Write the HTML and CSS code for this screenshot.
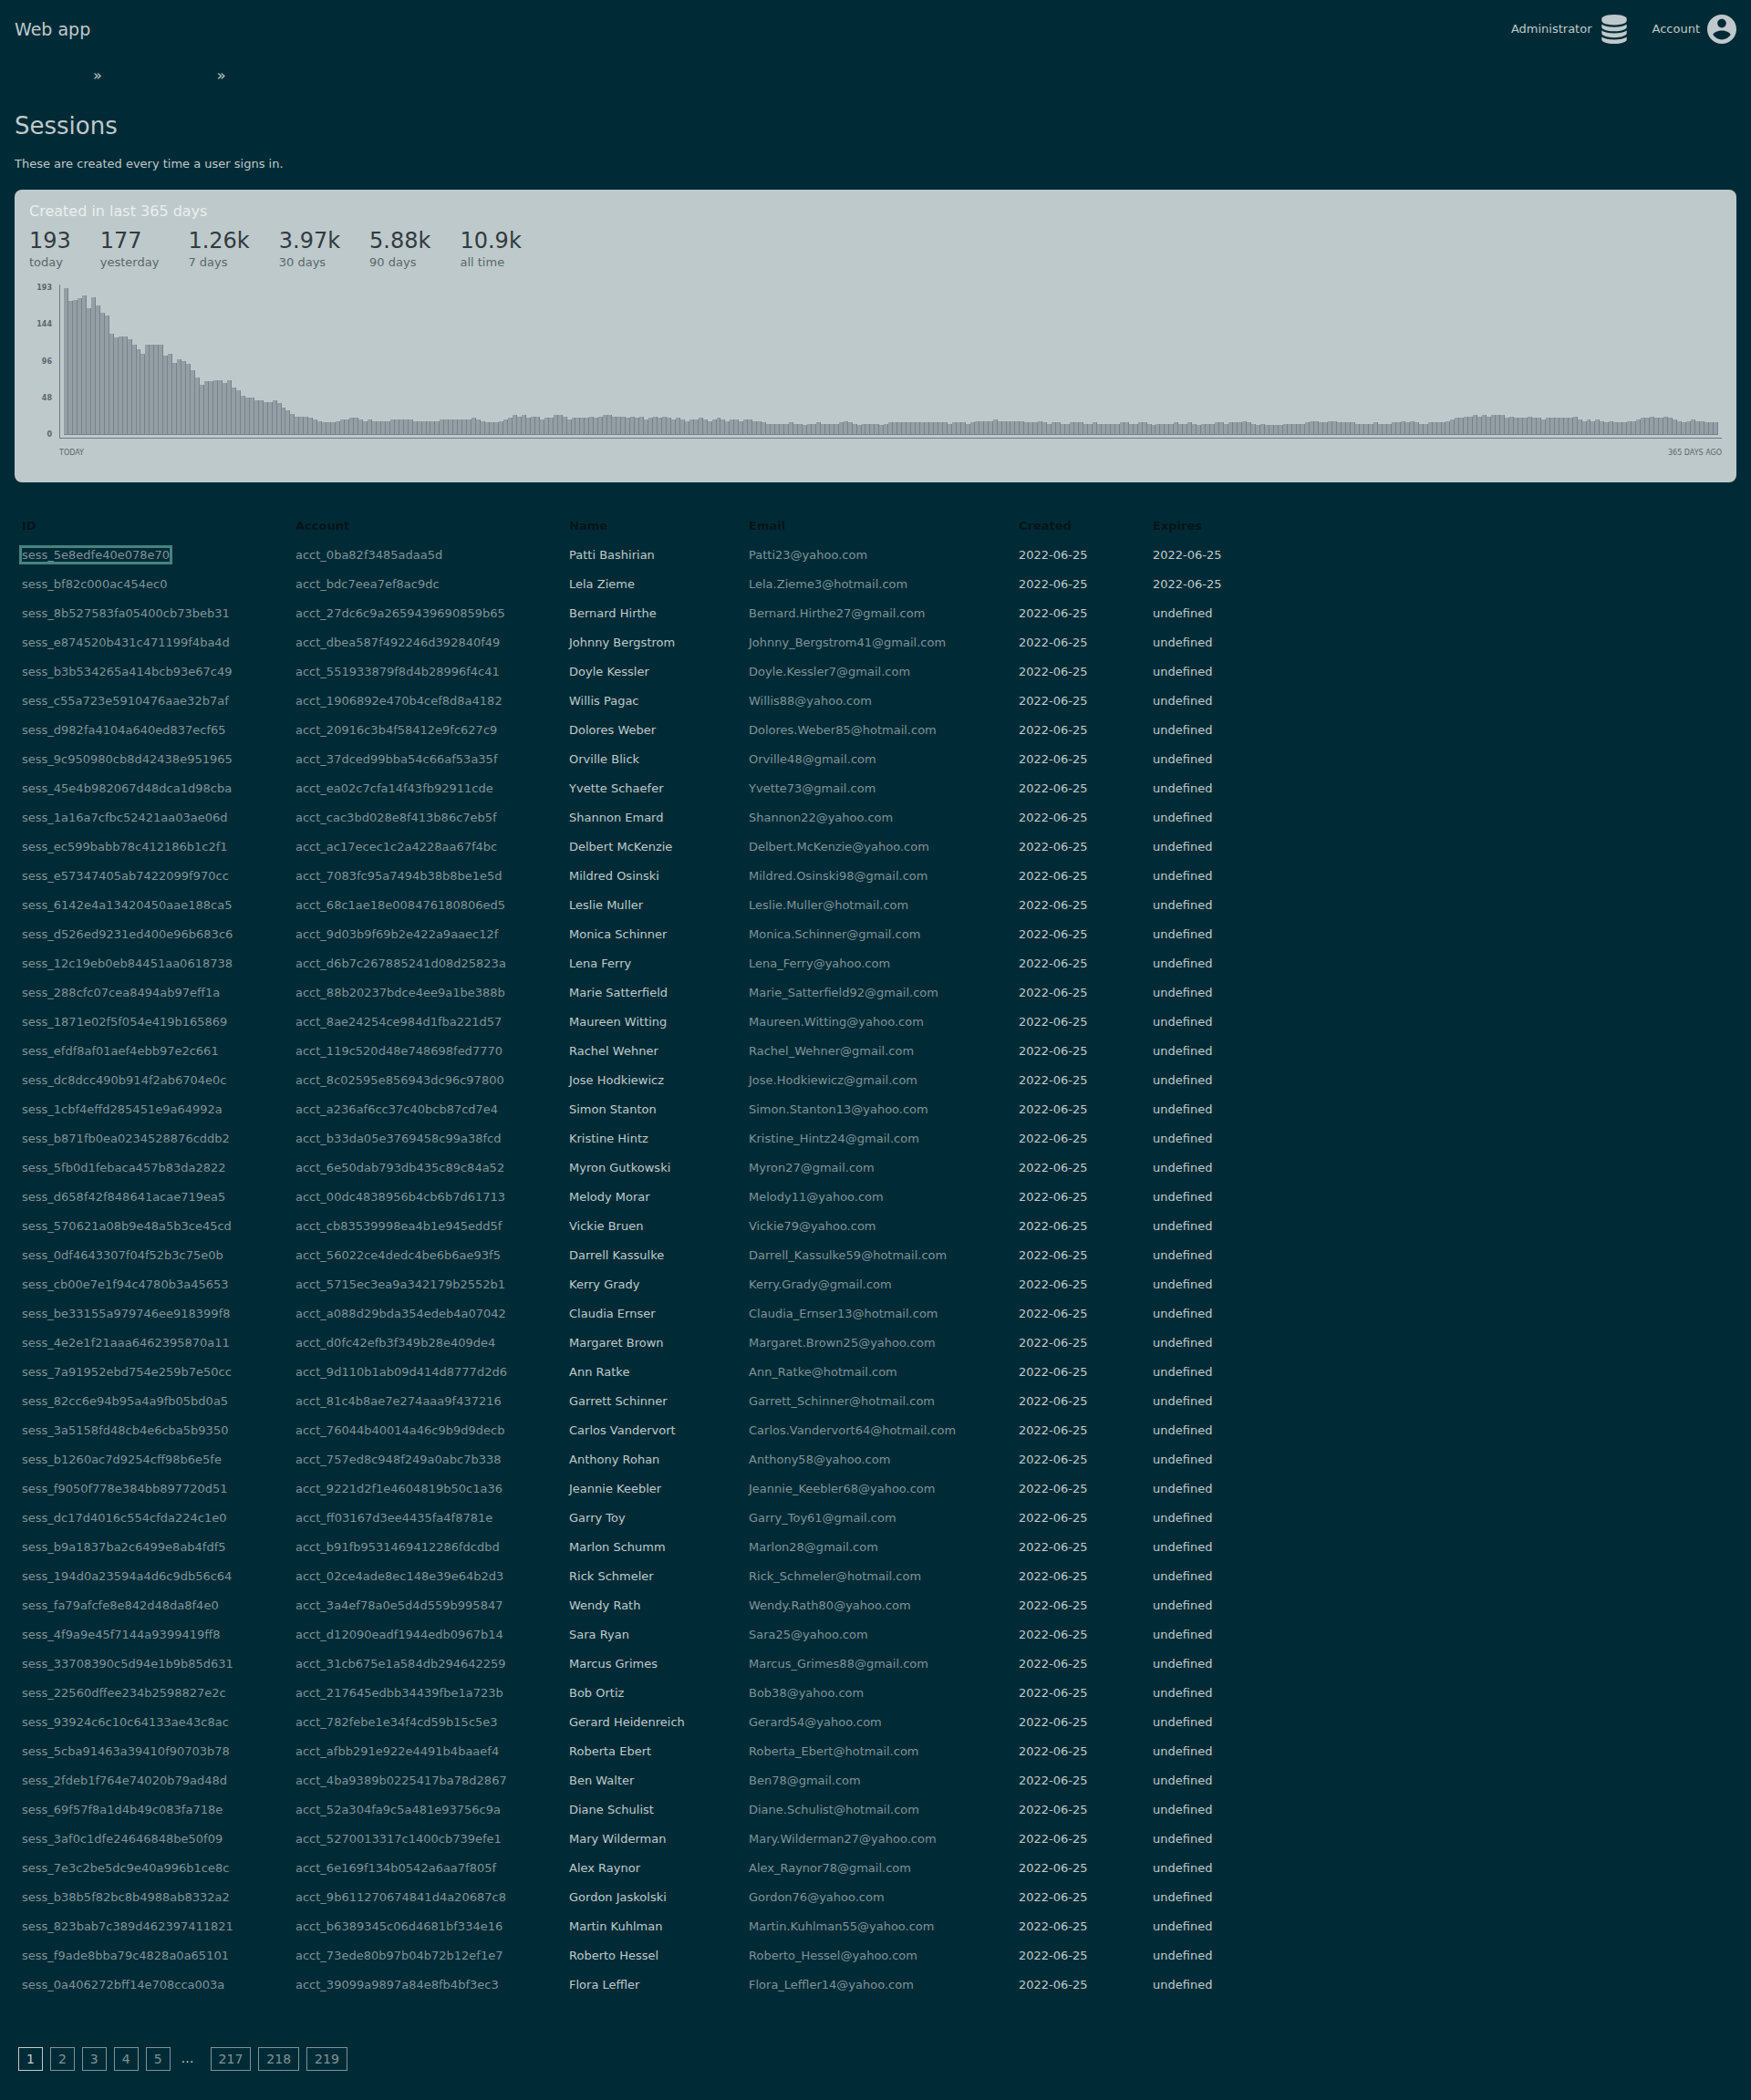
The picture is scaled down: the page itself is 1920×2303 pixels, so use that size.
FILE: index.html
```html
<!DOCTYPE html>
<html lang="en">
<head>
<meta charset="utf-8">
<meta name="viewport" content="width=device-width, initial-scale=1">
<title>Sessions</title>
<link rel="stylesheet" href="styles.css">
</head>
<body>
<header class="topbar">
  <a class="brand" href="#">Web app</a>
  <nav class="menus">
    <button class="menu" type="button">Administrator
      <svg class="menu-icon" viewBox="0 0 1536 1792" aria-hidden="true"><path d="M768 768q237 0 443-43t325-127v170q0 69-103 128t-280 93.500-385 34.500-385-34.500-280-93.500-103-128v-170q119 84 325 127t443 43zm0 768q237 0 443-43t325-127v170q0 69-103 128t-280 93.500-385 34.500-385-34.500-280-93.500-103-128v-170q119 84 325 127t443 43zm0-384q237 0 443-43t325-127v170q0 69-103 128t-280 93.500-385 34.500-385-34.500-280-93.500-103-128v-170q119 84 325 127t443 43zm0-1152q208 0 385 34.500t280 93.500 103 128v128q0 69-103 128t-280 93.500-385 34.500-385-34.500-280-93.500-103-128v-128q0-69 103-128t280-93.500 385-34.500z"/></svg>
    </button>
    <button class="menu" type="button">Account
      <svg class="menu-icon" viewBox="2 2 20 20" aria-hidden="true"><path d="M12 2C6.480 2 2 6.480 2 12s4.480 10 10 10 10-4.480 10-10S17.520 2 12 2zm0 3c1.660 0 3 1.340 3 3s-1.340 3-3 3-3-1.340-3-3 1.340-3 3-3zm0 14.200c-2.500 0-4.710-1.280-6-3.220.030-1.990 4-3.080 6-3.080 1.990 0 5.970 1.090 6 3.080-1.290 1.940-3.500 3.220-6 3.220z"/></svg>
    </button>
  </nav>
</header>
<div class="breadcrumbs"><span>»</span><span>»</span></div>
<main>
  <h1>Sessions</h1>
  <p class="intro">These are created every time a user signs in.</p>

  <section class="card">
    <h2>Created in last 365 days</h2>
    <ul class="stats">
      <li><strong>193</strong>today</li>
      <li><strong>177</strong>yesterday</li>
      <li><strong>1.26k</strong>7 days</li>
      <li><strong>3.97k</strong>30 days</li>
      <li><strong>5.88k</strong>90 days</li>
      <li><strong>10.9k</strong>all time</li>
    </ul>
    <div class="chart">
      <div class="scale"><span>193</span><span>144</span><span>96</span><span>48</span><span>0</span></div>
      <div class="bars" id="bars"></div>
      <div class="range"><span>TODAY</span><span>365 DAYS AGO</span></div>
    </div>
  </section>

  <table>
    <colgroup><col class="col-id"><col class="col-id"><col class="col-name"><col class="col-email"><col class="col-date"><col class="col-date"></colgroup>
    <thead>
      <tr><th>ID</th><th>Account</th><th>Name</th><th>Email</th><th>Created</th><th>Expires</th></tr>
    </thead>
    <tbody>
      <tr><td><a class="focused" href="#">sess_5e8edfe40e078e70</a></td><td><a href="#">acct_0ba82f3485adaa5d</a></td><td>Patti Bashirian</td><td><a href="#">Patti23@yahoo.com</a></td><td>2022-06-25</td><td>2022-06-25</td></tr>
      <tr><td><a href="#">sess_bf82c000ac454ec0</a></td><td><a href="#">acct_bdc7eea7ef8ac9dc</a></td><td>Lela Zieme</td><td><a href="#">Lela.Zieme3@hotmail.com</a></td><td>2022-06-25</td><td>2022-06-25</td></tr>
      <tr><td><a href="#">sess_8b527583fa05400cb73beb31</a></td><td><a href="#">acct_27dc6c9a2659439690859b65</a></td><td>Bernard Hirthe</td><td><a href="#">Bernard.Hirthe27@gmail.com</a></td><td>2022-06-25</td><td>undefined</td></tr>
      <tr><td><a href="#">sess_e874520b431c471199f4ba4d</a></td><td><a href="#">acct_dbea587f492246d392840f49</a></td><td>Johnny Bergstrom</td><td><a href="#">Johnny_Bergstrom41@gmail.com</a></td><td>2022-06-25</td><td>undefined</td></tr>
      <tr><td><a href="#">sess_b3b534265a414bcb93e67c49</a></td><td><a href="#">acct_551933879f8d4b28996f4c41</a></td><td>Doyle Kessler</td><td><a href="#">Doyle.Kessler7@gmail.com</a></td><td>2022-06-25</td><td>undefined</td></tr>
      <tr><td><a href="#">sess_c55a723e5910476aae32b7af</a></td><td><a href="#">acct_1906892e470b4cef8d8a4182</a></td><td>Willis Pagac</td><td><a href="#">Willis88@yahoo.com</a></td><td>2022-06-25</td><td>undefined</td></tr>
      <tr><td><a href="#">sess_d982fa4104a640ed837ecf65</a></td><td><a href="#">acct_20916c3b4f58412e9fc627c9</a></td><td>Dolores Weber</td><td><a href="#">Dolores.Weber85@hotmail.com</a></td><td>2022-06-25</td><td>undefined</td></tr>
      <tr><td><a href="#">sess_9c950980cb8d42438e951965</a></td><td><a href="#">acct_37dced99bba54c66af53a35f</a></td><td>Orville Blick</td><td><a href="#">Orville48@gmail.com</a></td><td>2022-06-25</td><td>undefined</td></tr>
      <tr><td><a href="#">sess_45e4b982067d48dca1d98cba</a></td><td><a href="#">acct_ea02c7cfa14f43fb92911cde</a></td><td>Yvette Schaefer</td><td><a href="#">Yvette73@gmail.com</a></td><td>2022-06-25</td><td>undefined</td></tr>
      <tr><td><a href="#">sess_1a16a7cfbc52421aa03ae06d</a></td><td><a href="#">acct_cac3bd028e8f413b86c7eb5f</a></td><td>Shannon Emard</td><td><a href="#">Shannon22@yahoo.com</a></td><td>2022-06-25</td><td>undefined</td></tr>
      <tr><td><a href="#">sess_ec599babb78c412186b1c2f1</a></td><td><a href="#">acct_ac17ecec1c2a4228aa67f4bc</a></td><td>Delbert McKenzie</td><td><a href="#">Delbert.McKenzie@yahoo.com</a></td><td>2022-06-25</td><td>undefined</td></tr>
      <tr><td><a href="#">sess_e57347405ab7422099f970cc</a></td><td><a href="#">acct_7083fc95a7494b38b8be1e5d</a></td><td>Mildred Osinski</td><td><a href="#">Mildred.Osinski98@gmail.com</a></td><td>2022-06-25</td><td>undefined</td></tr>
      <tr><td><a href="#">sess_6142e4a13420450aae188ca5</a></td><td><a href="#">acct_68c1ae18e008476180806ed5</a></td><td>Leslie Muller</td><td><a href="#">Leslie.Muller@hotmail.com</a></td><td>2022-06-25</td><td>undefined</td></tr>
      <tr><td><a href="#">sess_d526ed9231ed400e96b683c6</a></td><td><a href="#">acct_9d03b9f69b2e422a9aaec12f</a></td><td>Monica Schinner</td><td><a href="#">Monica.Schinner@gmail.com</a></td><td>2022-06-25</td><td>undefined</td></tr>
      <tr><td><a href="#">sess_12c19eb0eb84451aa0618738</a></td><td><a href="#">acct_d6b7c267885241d08d25823a</a></td><td>Lena Ferry</td><td><a href="#">Lena_Ferry@yahoo.com</a></td><td>2022-06-25</td><td>undefined</td></tr>
      <tr><td><a href="#">sess_288cfc07cea8494ab97eff1a</a></td><td><a href="#">acct_88b20237bdce4ee9a1be388b</a></td><td>Marie Satterfield</td><td><a href="#">Marie_Satterfield92@gmail.com</a></td><td>2022-06-25</td><td>undefined</td></tr>
      <tr><td><a href="#">sess_1871e02f5f054e419b165869</a></td><td><a href="#">acct_8ae24254ce984d1fba221d57</a></td><td>Maureen Witting</td><td><a href="#">Maureen.Witting@yahoo.com</a></td><td>2022-06-25</td><td>undefined</td></tr>
      <tr><td><a href="#">sess_efdf8af01aef4ebb97e2c661</a></td><td><a href="#">acct_119c520d48e748698fed7770</a></td><td>Rachel Wehner</td><td><a href="#">Rachel_Wehner@gmail.com</a></td><td>2022-06-25</td><td>undefined</td></tr>
      <tr><td><a href="#">sess_dc8dcc490b914f2ab6704e0c</a></td><td><a href="#">acct_8c02595e856943dc96c97800</a></td><td>Jose Hodkiewicz</td><td><a href="#">Jose.Hodkiewicz@gmail.com</a></td><td>2022-06-25</td><td>undefined</td></tr>
      <tr><td><a href="#">sess_1cbf4effd285451e9a64992a</a></td><td><a href="#">acct_a236af6cc37c40bcb87cd7e4</a></td><td>Simon Stanton</td><td><a href="#">Simon.Stanton13@yahoo.com</a></td><td>2022-06-25</td><td>undefined</td></tr>
      <tr><td><a href="#">sess_b871fb0ea0234528876cddb2</a></td><td><a href="#">acct_b33da05e3769458c99a38fcd</a></td><td>Kristine Hintz</td><td><a href="#">Kristine_Hintz24@gmail.com</a></td><td>2022-06-25</td><td>undefined</td></tr>
      <tr><td><a href="#">sess_5fb0d1febaca457b83da2822</a></td><td><a href="#">acct_6e50dab793db435c89c84a52</a></td><td>Myron Gutkowski</td><td><a href="#">Myron27@gmail.com</a></td><td>2022-06-25</td><td>undefined</td></tr>
      <tr><td><a href="#">sess_d658f42f848641acae719ea5</a></td><td><a href="#">acct_00dc4838956b4cb6b7d61713</a></td><td>Melody Morar</td><td><a href="#">Melody11@yahoo.com</a></td><td>2022-06-25</td><td>undefined</td></tr>
      <tr><td><a href="#">sess_570621a08b9e48a5b3ce45cd</a></td><td><a href="#">acct_cb83539998ea4b1e945edd5f</a></td><td>Vickie Bruen</td><td><a href="#">Vickie79@yahoo.com</a></td><td>2022-06-25</td><td>undefined</td></tr>
      <tr><td><a href="#">sess_0df4643307f04f52b3c75e0b</a></td><td><a href="#">acct_56022ce4dedc4be6b6ae93f5</a></td><td>Darrell Kassulke</td><td><a href="#">Darrell_Kassulke59@hotmail.com</a></td><td>2022-06-25</td><td>undefined</td></tr>
      <tr><td><a href="#">sess_cb00e7e1f94c4780b3a45653</a></td><td><a href="#">acct_5715ec3ea9a342179b2552b1</a></td><td>Kerry Grady</td><td><a href="#">Kerry.Grady@gmail.com</a></td><td>2022-06-25</td><td>undefined</td></tr>
      <tr><td><a href="#">sess_be33155a979746ee918399f8</a></td><td><a href="#">acct_a088d29bda354edeb4a07042</a></td><td>Claudia Ernser</td><td><a href="#">Claudia_Ernser13@hotmail.com</a></td><td>2022-06-25</td><td>undefined</td></tr>
      <tr><td><a href="#">sess_4e2e1f21aaa6462395870a11</a></td><td><a href="#">acct_d0fc42efb3f349b28e409de4</a></td><td>Margaret Brown</td><td><a href="#">Margaret.Brown25@yahoo.com</a></td><td>2022-06-25</td><td>undefined</td></tr>
      <tr><td><a href="#">sess_7a91952ebd754e259b7e50cc</a></td><td><a href="#">acct_9d110b1ab09d414d8777d2d6</a></td><td>Ann Ratke</td><td><a href="#">Ann_Ratke@hotmail.com</a></td><td>2022-06-25</td><td>undefined</td></tr>
      <tr><td><a href="#">sess_82cc6e94b95a4a9fb05bd0a5</a></td><td><a href="#">acct_81c4b8ae7e274aaa9f437216</a></td><td>Garrett Schinner</td><td><a href="#">Garrett_Schinner@hotmail.com</a></td><td>2022-06-25</td><td>undefined</td></tr>
      <tr><td><a href="#">sess_3a5158fd48cb4e6cba5b9350</a></td><td><a href="#">acct_76044b40014a46c9b9d9decb</a></td><td>Carlos Vandervort</td><td><a href="#">Carlos.Vandervort64@hotmail.com</a></td><td>2022-06-25</td><td>undefined</td></tr>
      <tr><td><a href="#">sess_b1260ac7d9254cff98b6e5fe</a></td><td><a href="#">acct_757ed8c948f249a0abc7b338</a></td><td>Anthony Rohan</td><td><a href="#">Anthony58@yahoo.com</a></td><td>2022-06-25</td><td>undefined</td></tr>
      <tr><td><a href="#">sess_f9050f778e384bb897720d51</a></td><td><a href="#">acct_9221d2f1e4604819b50c1a36</a></td><td>Jeannie Keebler</td><td><a href="#">Jeannie_Keebler68@yahoo.com</a></td><td>2022-06-25</td><td>undefined</td></tr>
      <tr><td><a href="#">sess_dc17d4016c554cfda224c1e0</a></td><td><a href="#">acct_ff03167d3ee4435fa4f8781e</a></td><td>Garry Toy</td><td><a href="#">Garry_Toy61@gmail.com</a></td><td>2022-06-25</td><td>undefined</td></tr>
      <tr><td><a href="#">sess_b9a1837ba2c6499e8ab4fdf5</a></td><td><a href="#">acct_b91fb9531469412286fdcdbd</a></td><td>Marlon Schumm</td><td><a href="#">Marlon28@gmail.com</a></td><td>2022-06-25</td><td>undefined</td></tr>
      <tr><td><a href="#">sess_194d0a23594a4d6c9db56c64</a></td><td><a href="#">acct_02ce4ade8ec148e39e64b2d3</a></td><td>Rick Schmeler</td><td><a href="#">Rick_Schmeler@hotmail.com</a></td><td>2022-06-25</td><td>undefined</td></tr>
      <tr><td><a href="#">sess_fa79afcfe8e842d48da8f4e0</a></td><td><a href="#">acct_3a4ef78a0e5d4d559b995847</a></td><td>Wendy Rath</td><td><a href="#">Wendy.Rath80@yahoo.com</a></td><td>2022-06-25</td><td>undefined</td></tr>
      <tr><td><a href="#">sess_4f9a9e45f7144a9399419ff8</a></td><td><a href="#">acct_d12090eadf1944edb0967b14</a></td><td>Sara Ryan</td><td><a href="#">Sara25@yahoo.com</a></td><td>2022-06-25</td><td>undefined</td></tr>
      <tr><td><a href="#">sess_33708390c5d94e1b9b85d631</a></td><td><a href="#">acct_31cb675e1a584db294642259</a></td><td>Marcus Grimes</td><td><a href="#">Marcus_Grimes88@gmail.com</a></td><td>2022-06-25</td><td>undefined</td></tr>
      <tr><td><a href="#">sess_22560dffee234b2598827e2c</a></td><td><a href="#">acct_217645edbb34439fbe1a723b</a></td><td>Bob Ortiz</td><td><a href="#">Bob38@yahoo.com</a></td><td>2022-06-25</td><td>undefined</td></tr>
      <tr><td><a href="#">sess_93924c6c10c64133ae43c8ac</a></td><td><a href="#">acct_782febe1e34f4cd59b15c5e3</a></td><td>Gerard Heidenreich</td><td><a href="#">Gerard54@yahoo.com</a></td><td>2022-06-25</td><td>undefined</td></tr>
      <tr><td><a href="#">sess_5cba91463a39410f90703b78</a></td><td><a href="#">acct_afbb291e922e4491b4baaef4</a></td><td>Roberta Ebert</td><td><a href="#">Roberta_Ebert@hotmail.com</a></td><td>2022-06-25</td><td>undefined</td></tr>
      <tr><td><a href="#">sess_2fdeb1f764e74020b79ad48d</a></td><td><a href="#">acct_4ba9389b0225417ba78d2867</a></td><td>Ben Walter</td><td><a href="#">Ben78@gmail.com</a></td><td>2022-06-25</td><td>undefined</td></tr>
      <tr><td><a href="#">sess_69f57f8a1d4b49c083fa718e</a></td><td><a href="#">acct_52a304fa9c5a481e93756c9a</a></td><td>Diane Schulist</td><td><a href="#">Diane.Schulist@hotmail.com</a></td><td>2022-06-25</td><td>undefined</td></tr>
      <tr><td><a href="#">sess_3af0c1dfe24646848be50f09</a></td><td><a href="#">acct_5270013317c1400cb739efe1</a></td><td>Mary Wilderman</td><td><a href="#">Mary.Wilderman27@yahoo.com</a></td><td>2022-06-25</td><td>undefined</td></tr>
      <tr><td><a href="#">sess_7e3c2be5dc9e40a996b1ce8c</a></td><td><a href="#">acct_6e169f134b0542a6aa7f805f</a></td><td>Alex Raynor</td><td><a href="#">Alex_Raynor78@gmail.com</a></td><td>2022-06-25</td><td>undefined</td></tr>
      <tr><td><a href="#">sess_b38b5f82bc8b4988ab8332a2</a></td><td><a href="#">acct_9b611270674841d4a20687c8</a></td><td>Gordon Jaskolski</td><td><a href="#">Gordon76@yahoo.com</a></td><td>2022-06-25</td><td>undefined</td></tr>
      <tr><td><a href="#">sess_823bab7c389d462397411821</a></td><td><a href="#">acct_b6389345c06d4681bf334e16</a></td><td>Martin Kuhlman</td><td><a href="#">Martin.Kuhlman55@yahoo.com</a></td><td>2022-06-25</td><td>undefined</td></tr>
      <tr><td><a href="#">sess_f9ade8bba79c4828a0a65101</a></td><td><a href="#">acct_73ede80b97b04b72b12ef1e7</a></td><td>Roberto Hessel</td><td><a href="#">Roberto_Hessel@yahoo.com</a></td><td>2022-06-25</td><td>undefined</td></tr>
      <tr><td><a href="#">sess_0a406272bff14e708cca003a</a></td><td><a href="#">acct_39099a9897a84e8fb4bf3ec3</a></td><td>Flora Leffler</td><td><a href="#">Flora_Leffler14@yahoo.com</a></td><td>2022-06-25</td><td>undefined</td></tr>
    </tbody>
  </table>

  <nav class="pages">
    <a class="current" href="#">1</a>
    <a href="#">2</a>
    <a href="#">3</a>
    <a href="#">4</a>
    <a href="#">5</a>
    <span class="more">…</span>
    <a href="#">217</a>
    <a href="#">218</a>
    <a href="#">219</a>
  </nav>
</main>
<script src="chart.js"></script>
</body>
</html>
```
FILE: styles.css
```css
:root {
  --bg: #002b36;
  --text: #bfc9cb;
  --link: #7f9297;
}

* {
  box-sizing: border-box;
}

body {
  margin: 0;
  padding: 16px 16px 32px;
  background: var(--bg);
  color: var(--text);
  font-family: "DejaVu Sans", sans-serif;
  font-size: 13px;
  line-height: 16px;
}

a {
  color: var(--link);
  text-decoration: none;
}

/* Top bar */
.topbar,
.menus,
.menu {
  display: flex;
  align-items: center;
}

.topbar {
  justify-content: space-between;
}

.brand {
  color: var(--text);
  font-size: 19px;
  line-height: 24px;
}

.menus {
  gap: 26px;
}

.menu {
  gap: 8px;
  padding: 0;
  border: 0;
  background: none;
  color: inherit;
  font: inherit;
}

.menu-icon {
  width: 32px;
  height: 32px;
  fill: currentColor;
}

.breadcrumbs {
  display: flex;
  gap: 126px;
  margin-top: 25px;
  padding-left: 86px;
  font-size: 16px;
  line-height: 20px;
}

/* Page heading */
h1 {
  margin: 29px 0 18px;
  font-size: 26px;
  font-weight: 400;
  line-height: 32px;
}

.intro {
  margin: 0 0 20px;
}

/* Statistics card */
.card {
  padding: 16px;
  border-radius: 8px;
  background: #bec9cb;
  color: #5b676a;
}

.card h2 {
  margin: 0 0 8px;
  color: #ebefef;
  font-size: 16px;
  font-weight: 400;
  line-height: 16px;
}

.stats {
  display: flex;
  gap: 32px;
  margin: 0 0 16px;
  padding: 0;
  list-style: none;
}

.stats strong {
  display: block;
  color: #333a3f;
  font-size: 24px;
  font-weight: 400;
  line-height: 32px;
}

.chart {
  display: grid;
  grid-template-columns: 25px 1fr;
  column-gap: 8px;
  font-size: 8px;
}

.scale {
  display: flex;
  flex-direction: column;
  justify-content: space-between;
  font-weight: 700;
  line-height: 8px;
  text-align: right;
}

.bars {
  display: flex;
  align-items: flex-end;
  padding: 4px 3px 3px 4px;
  border: solid #6c7980;
  border-width: 0 0 1px 1px;
}

.bar {
  flex: 1;
  border: solid #76838a;
  border-width: 0 1px 1px 0;
  background: #959ea5;
}

.range {
  grid-column: 2;
  display: flex;
  justify-content: space-between;
  padding: 8px 0;
  line-height: 16px;
}

/* Session list */
table {
  margin: 32px 0 52px;
  border-collapse: collapse;
  table-layout: fixed;
  width: 1387px;
}

.col-id {
  width: 300px;
}

.col-name {
  width: 197px;
}

.col-email {
  width: 296px;
}

.col-date {
  width: 147px;
}

th,
td {
  padding: 8px;
  text-align: left;
}

th {
  color: #00151b;
}

.focused {
  outline: 3px solid #438482;
}

/* Pagination */
.pages {
  display: flex;
  gap: 8px;
  padding-left: 4px;
  font-size: 14px;
  line-height: 24px;
}

.pages a {
  padding: 0 8px;
  border: 1px solid var(--link);
}

.pages .current {
  border-color: var(--text);
  color: var(--text);
}

.more {
  width: 28px;
  padding-left: 4px;
}
```
FILE: chart.js
```js
// Bar heights from today back to 365 days ago, as "height" or "height*days".
const days = `161 147 148 150 153 139 151 142 134 131 111 107 108*2 105 99 94 89 99*4 87 89 79 83 81 78 71 63 55
59*2 60*2 57 60 52 49 43 41*2 38*2 36*2 38 35 30 27 23 20*3 19 17 15 14*3 15 17*2 19*2 17 15 17 15*4 17*5 15*6
17*7 19 17 15 14*3 15 17 19 22 20 22 19 20*2 17 19*2 22*2 20 17 19*4 20 19 20 22*2 20*3 19 20 19 20 17 19 20 19 20 19
17 19 17 15 17*2 19 17 15 17 19 17 15 17*2 15 17*2 15*2 14 12*5 14 12*2 11 12*2 14 12*4 14 15 14 12 11
12*4 11 12 14*13 12 14*3 12 14 15*4 17 15*6 14*3 15 14 12 14*2 12*2 14*3 12*2 14 12*5 14*2 12*2 14*2 12 11
12*4 14 12*2 14 12 11 12*3 14*2 12 14*3 15 14 12 11 12 11*4 12*5 14 15*2 14*2 15*2 14*4 12*4 14 12*3 14*2 15 14 15 14
12*2 14*4 15 17 19*2 20*2 22 20 22 20 22*3 19 20 19*3 20 19*2 17 19*6 20 17 15 17 15 17 15 14 15 14*3 15*2 17
19*2 20 19*2 20 19 17 15 14 15 17 15*2 14*3`;

const bars = document.getElementById("bars");

for (const run of days.split(/\s+/)) {
  const [height, count = 1] = run.split("*");
  for (let i = 0; i < count; i++) {
    const bar = document.createElement("div");
    bar.className = "bar";
    bar.style.height = height + "px";
    bars.append(bar);
  }
}
```
